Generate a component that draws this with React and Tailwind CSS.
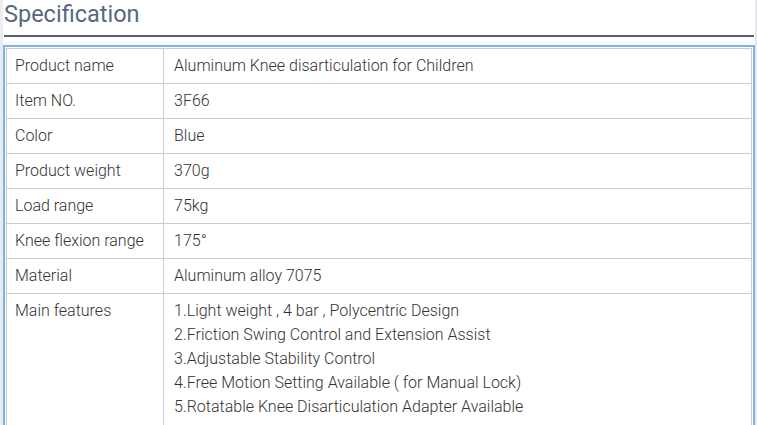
import React from "react";

const rows = [
  ["Product name", "Aluminum Knee disarticulation for Children"],
  ["Item NO.", "3F66"],
  ["Color", "Blue"],
  ["Product weight", "370g"],
  ["Load range", "75kg"],
  ["Knee flexion range", "175°"],
  ["Material", "Aluminum alloy 7075"],
];

const features = [
  "1.Light weight , 4 bar , Polycentric Design",
  "2.Friction Swing Control and Extension Assist",
  "3.Adjustable Stability Control",
  "4.Free Motion Setting Available ( for Manual Lock)",
  "5.Rotatable Knee Disarticulation Adapter Available",
];

const App = () => {
  return (
    <div
      className="flex w-[757px] h-[425px] overflow-hidden bg-white"
      style={{ fontFamily: "Roboto, 'Liberation Sans', sans-serif" }}
    >
      <div className="w-[3px] shrink-0 bg-[#ececf1]" />
      <div className="flex-1 flex flex-col pl-[1px]">
        <div className="pb-[7px] border-b-2 border-[#536276] mr-[1px]">
          <h2 className="text-[23.5px] leading-[28px] text-[#58687f] font-normal">
            Specification
          </h2>
        </div>
        <div className="mt-[8px] -ml-[1px] border-2 border-[#7eb4e8] p-[1px] shadow-[0_-3px_4px_rgba(0,0,0,0.04)]">
          <table className="w-full border-collapse text-[16px] font-light text-[#333333]">
            <tbody>
              {rows.map(([label, value]) => (
                <tr key={label} className="h-[35px]">
                  <td className="w-[157px] border border-[#cccccc] pl-[8px] pr-[10px] align-middle">
                    {label}
                  </td>
                  <td className="border border-[#cccccc] px-[10px] align-middle">
                    {value}
                  </td>
                </tr>
              ))}
              <tr>
                <td className="w-[157px] border border-[#cccccc] pl-[8px] pr-[10px] pt-[5px] align-top leading-[24px]">
                  Main features
                </td>
                <td className="border border-[#cccccc] px-[10px] pt-[5px] pb-[6px] align-top leading-[24px]">
                  {features.map((f) => (
                    <div key={f}>{f}</div>
                  ))}
                </td>
              </tr>
            </tbody>
          </table>
        </div>
      </div>
      <div className="w-[2px] shrink-0 bg-[#e6e6ec]" />
    </div>
  );
};

export default App;
